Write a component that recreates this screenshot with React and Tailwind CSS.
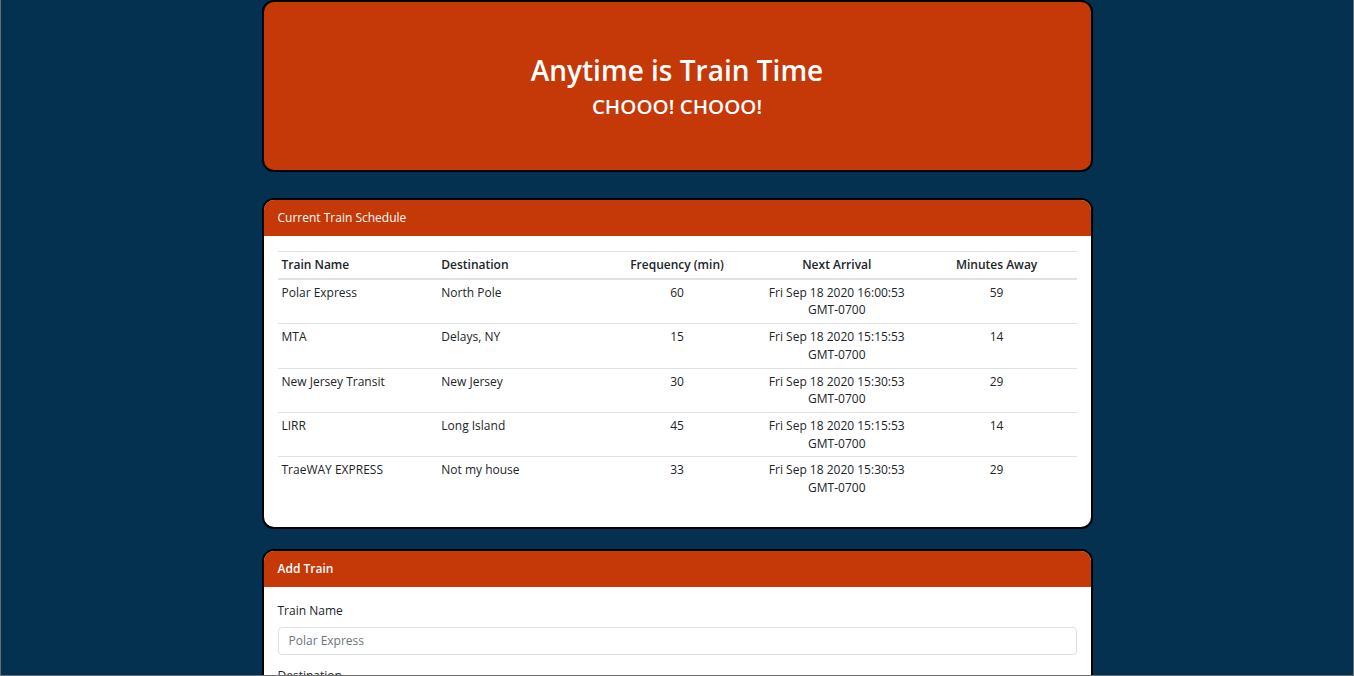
const trains = [
  { name: "Polar Express", dest: "North Pole", freq: 60, next: "Fri Sep 18 2020 16:00:53", away: 59 },
  { name: "MTA", dest: "Delays, NY", freq: 15, next: "Fri Sep 18 2020 15:15:53", away: 14 },
  { name: "New Jersey Transit", dest: "New Jersey", freq: 30, next: "Fri Sep 18 2020 15:30:53", away: 29 },
  { name: "LIRR", dest: "Long Island", freq: 45, next: "Fri Sep 18 2020 15:15:53", away: 14 },
  { name: "TraeWAY EXPRESS", dest: "Not my house", freq: 33, next: "Fri Sep 18 2020 15:30:53", away: 29 },
];

function Card({ title, bold, children, className }) {
  return (
    <div className={"rounded-[12px] border-2 border-black bg-white overflow-hidden " + (className || "")}>
      <div className={"h-[36px] bg-[#c53807] px-[14px] flex items-center text-[12px] text-white " + (bold ? "font-semibold" : "")}>
        {title}
      </div>
      {children}
    </div>
  );
}

export default function App() {
  return (
    <div
      className="h-[676px] overflow-hidden bg-[#053150] border-x border-b border-[#6e6e6e] text-[#212529]"
      style={{ fontFamily: '"Open Sans", "Noto Sans", sans-serif' }}
    >
      <div className="w-[831px] mx-auto">
        {/* jumbotron */}
        <div className="h-[172px] rounded-[12px] border-2 border-black bg-[#c53807] flex flex-col items-center pt-[50px] text-white">
          <h1 className="text-[28px] font-semibold leading-[36px]">Anytime is Train Time</h1>
          <h3 className="mt-[5px] text-[20.5px] font-semibold leading-[26px]">CHOOO! CHOOO!</h3>
        </div>

        <Card title="Current Train Schedule" className="mt-[26px]">
          <div className="px-[14px] pt-[15px] pb-[26px]">
            <table className="w-full table-fixed border-t border-[#dee2e6] text-[12px] leading-[17.7px]">
              <thead>
                <tr className="border-b-2 border-[#dee2e6]">
                  <th className="p-[4px] text-left font-semibold">Train Name</th>
                  <th className="p-[4px] text-left font-semibold">Destination</th>
                  <th className="p-[4px] text-center font-semibold">Frequency (min)</th>
                  <th className="p-[4px] text-center font-semibold">Next Arrival</th>
                  <th className="p-[4px] text-center font-semibold">Minutes Away</th>
                </tr>
              </thead>
              <tbody>
                {trains.map((t, i) => (
                  <tr key={i} className={i > 0 ? "border-t border-[#dee2e6]" : ""}>
                    <td className="p-[4px] align-top">{t.name}</td>
                    <td className="p-[4px] align-top">{t.dest}</td>
                    <td className="p-[4px] align-top text-center">{t.freq}</td>
                    <td className="p-[4px] align-top text-center">
                      {t.next}
                      <br />
                      GMT-0700
                    </td>
                    <td className="p-[4px] align-top text-center">{t.away}</td>
                  </tr>
                ))}
              </tbody>
            </table>
          </div>
        </Card>

        <Card title="Add Train" bold className="mt-[20px]">
          <div className="px-[14px] pt-[15px] text-[12px] leading-[18px]">
            <label className="block mb-[7px]">Train Name</label>
            <input
              className="block w-full h-[28px] px-[10px] rounded-[4px] border border-[#dcdfe3] text-[12px] placeholder:text-[#6c757d] outline-none"
              placeholder="Polar Express"
            />
            <label className="block mt-[12px] mb-[7px]">Destination</label>
            <input
              className="block w-full h-[28px] px-[10px] rounded-[4px] border border-[#dcdfe3] text-[12px] placeholder:text-[#6c757d] outline-none"
              placeholder="North Pole"
            />
          </div>
        </Card>
      </div>
    </div>
  );
}
